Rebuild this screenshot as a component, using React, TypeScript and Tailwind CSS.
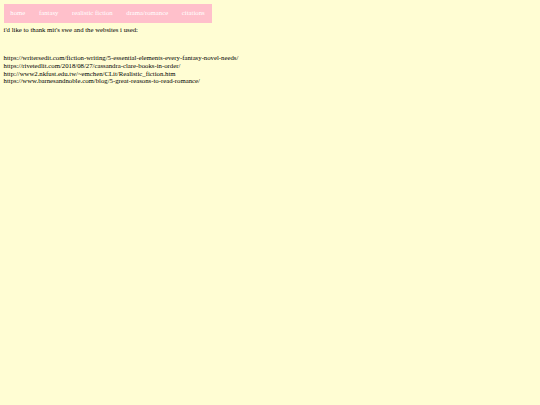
const links = [
  'https://writersedit.com/fiction-writing/5-essential-elements-every-fantasy-novel-needs/',
  'https://rivetedlit.com/2018/08/27/cassandra-clare-books-in-order/',
  'http://www2.nkfust.edu.tw/~emchen/CLit/Realistic_fiction.htm',
  'https://www.barnesandnoble.com/blog/5-great-reasons-to-read-romance/',
]

const navItems = ['home', 'fantasy', 'realistic fiction', 'drama/romance', 'citations']

export default function App() {
  return (
    <div
      className="w-[540px] h-[405px] bg-[#fffdd3] p-[3.5px] text-black text-[6.75px] leading-[7.8px]"
      style={{ fontFamily: '"Liberation Serif", serif' }}
    >
      <ul className="flex w-fit bg-[#ffc0cb]">
        {navItems.map((item) => (
          <li key={item} className="px-[6.8px] py-[5.6px] text-white leading-[8px]">
            {item}
          </li>
        ))}
      </ul>
      <p className="mt-[3px]">i'd like to thank mit's swe and the websites i used:</p>
      <div className="mt-[20.5px] flex flex-col">
        {links.map((l) => (
          <span key={l}>{l}</span>
        ))}
      </div>
    </div>
  )
}
